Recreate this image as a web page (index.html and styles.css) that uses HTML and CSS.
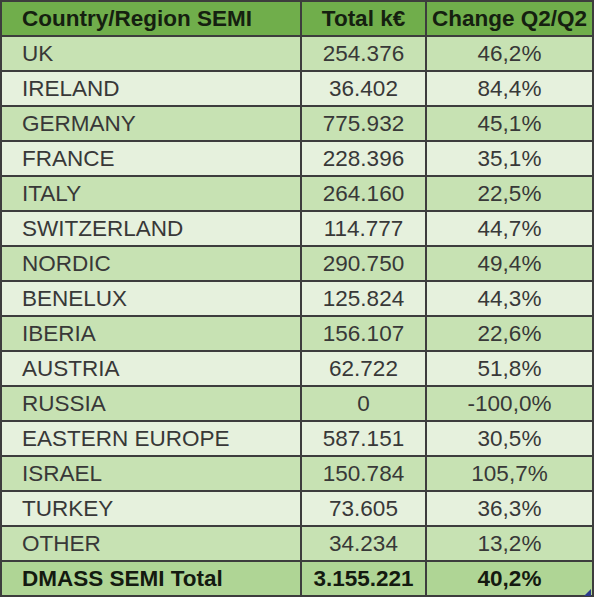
FILE: index.html
```html
<!DOCTYPE html>
<html>
<head>
<meta charset="utf-8">
<link rel="stylesheet" href="styles.css">
</head>
<body>
<div class="wrap">
<table class="sales">
  <colgroup>
    <col class="c1"><col class="c2"><col class="c3">
  </colgroup>
  <thead>
    <tr class="head"><th class="name">Country/Region SEMI</th><th>Total k€</th><th>Change Q2/Q2</th></tr>
  </thead>
  <tbody>
    <tr class="odd"><td class="name">UK</td><td>254.376</td><td>46,2%</td></tr>
    <tr class="even"><td class="name">IRELAND</td><td>36.402</td><td>84,4%</td></tr>
    <tr class="odd"><td class="name">GERMANY</td><td>775.932</td><td>45,1%</td></tr>
    <tr class="even"><td class="name">FRANCE</td><td>228.396</td><td>35,1%</td></tr>
    <tr class="odd"><td class="name">ITALY</td><td>264.160</td><td>22,5%</td></tr>
    <tr class="even"><td class="name">SWITZERLAND</td><td>114.777</td><td>44,7%</td></tr>
    <tr class="odd"><td class="name">NORDIC</td><td>290.750</td><td>49,4%</td></tr>
    <tr class="even"><td class="name">BENELUX</td><td>125.824</td><td>44,3%</td></tr>
    <tr class="odd"><td class="name">IBERIA</td><td>156.107</td><td>22,6%</td></tr>
    <tr class="even"><td class="name">AUSTRIA</td><td>62.722</td><td>51,8%</td></tr>
    <tr class="odd"><td class="name">RUSSIA</td><td>0</td><td>-100,0%</td></tr>
    <tr class="even"><td class="name">EASTERN EUROPE</td><td>587.151</td><td>30,5%</td></tr>
    <tr class="odd"><td class="name">ISRAEL</td><td>150.784</td><td>105,7%</td></tr>
    <tr class="even"><td class="name">TURKEY</td><td>73.605</td><td>36,3%</td></tr>
    <tr class="odd"><td class="name">OTHER</td><td>34.234</td><td>13,2%</td></tr>
  </tbody>
  <tfoot>
    <tr class="total"><td class="name">DMASS SEMI Total</td><td>3.155.221</td><td>40,2%</td></tr>
  </tfoot>
</table>
<span class="handle"></span>
</div>
</body>
</html>
```

FILE: styles.css
```css
html, body {
  margin: 0;
  padding: 0;
  background: #ffffff;
}
.wrap {
  position: relative;
  width: 592px;
}
.sales {
  border-collapse: collapse;
  table-layout: fixed;
  width: 592px;
  font-family: "Liberation Sans", Arial, sans-serif;
  font-size: 22.5px;
  color: #383838;
}
.c1 { width: 300px; }
.c2 { width: 125px; }
.c3 { width: 167px; }
.sales th,
.sales td {
  border: 2px solid #3d3d3d;
  padding: 0;
  text-align: center;
  height: 33px;
  line-height: 33px;
  white-space: nowrap;
  overflow: hidden;
}
.sales .name {
  text-align: left;
  padding-left: 20px;
}
.head th {
  background: #70ae4b;
  color: #152010;
  font-weight: bold;
  height: 33px;
}
.odd td { background: #c7e2b3; }
.even td { background: #e6f1dd; }
.total td {
  background: #afd595;
  color: #141a10;
  font-weight: bold;
}
.handle {
  position: absolute;
  right: 1px;
  bottom: 1px;
  width: 0;
  height: 0;
  border-left: 7px solid transparent;
  border-bottom: 7px solid #2c3b8c;
}
```
